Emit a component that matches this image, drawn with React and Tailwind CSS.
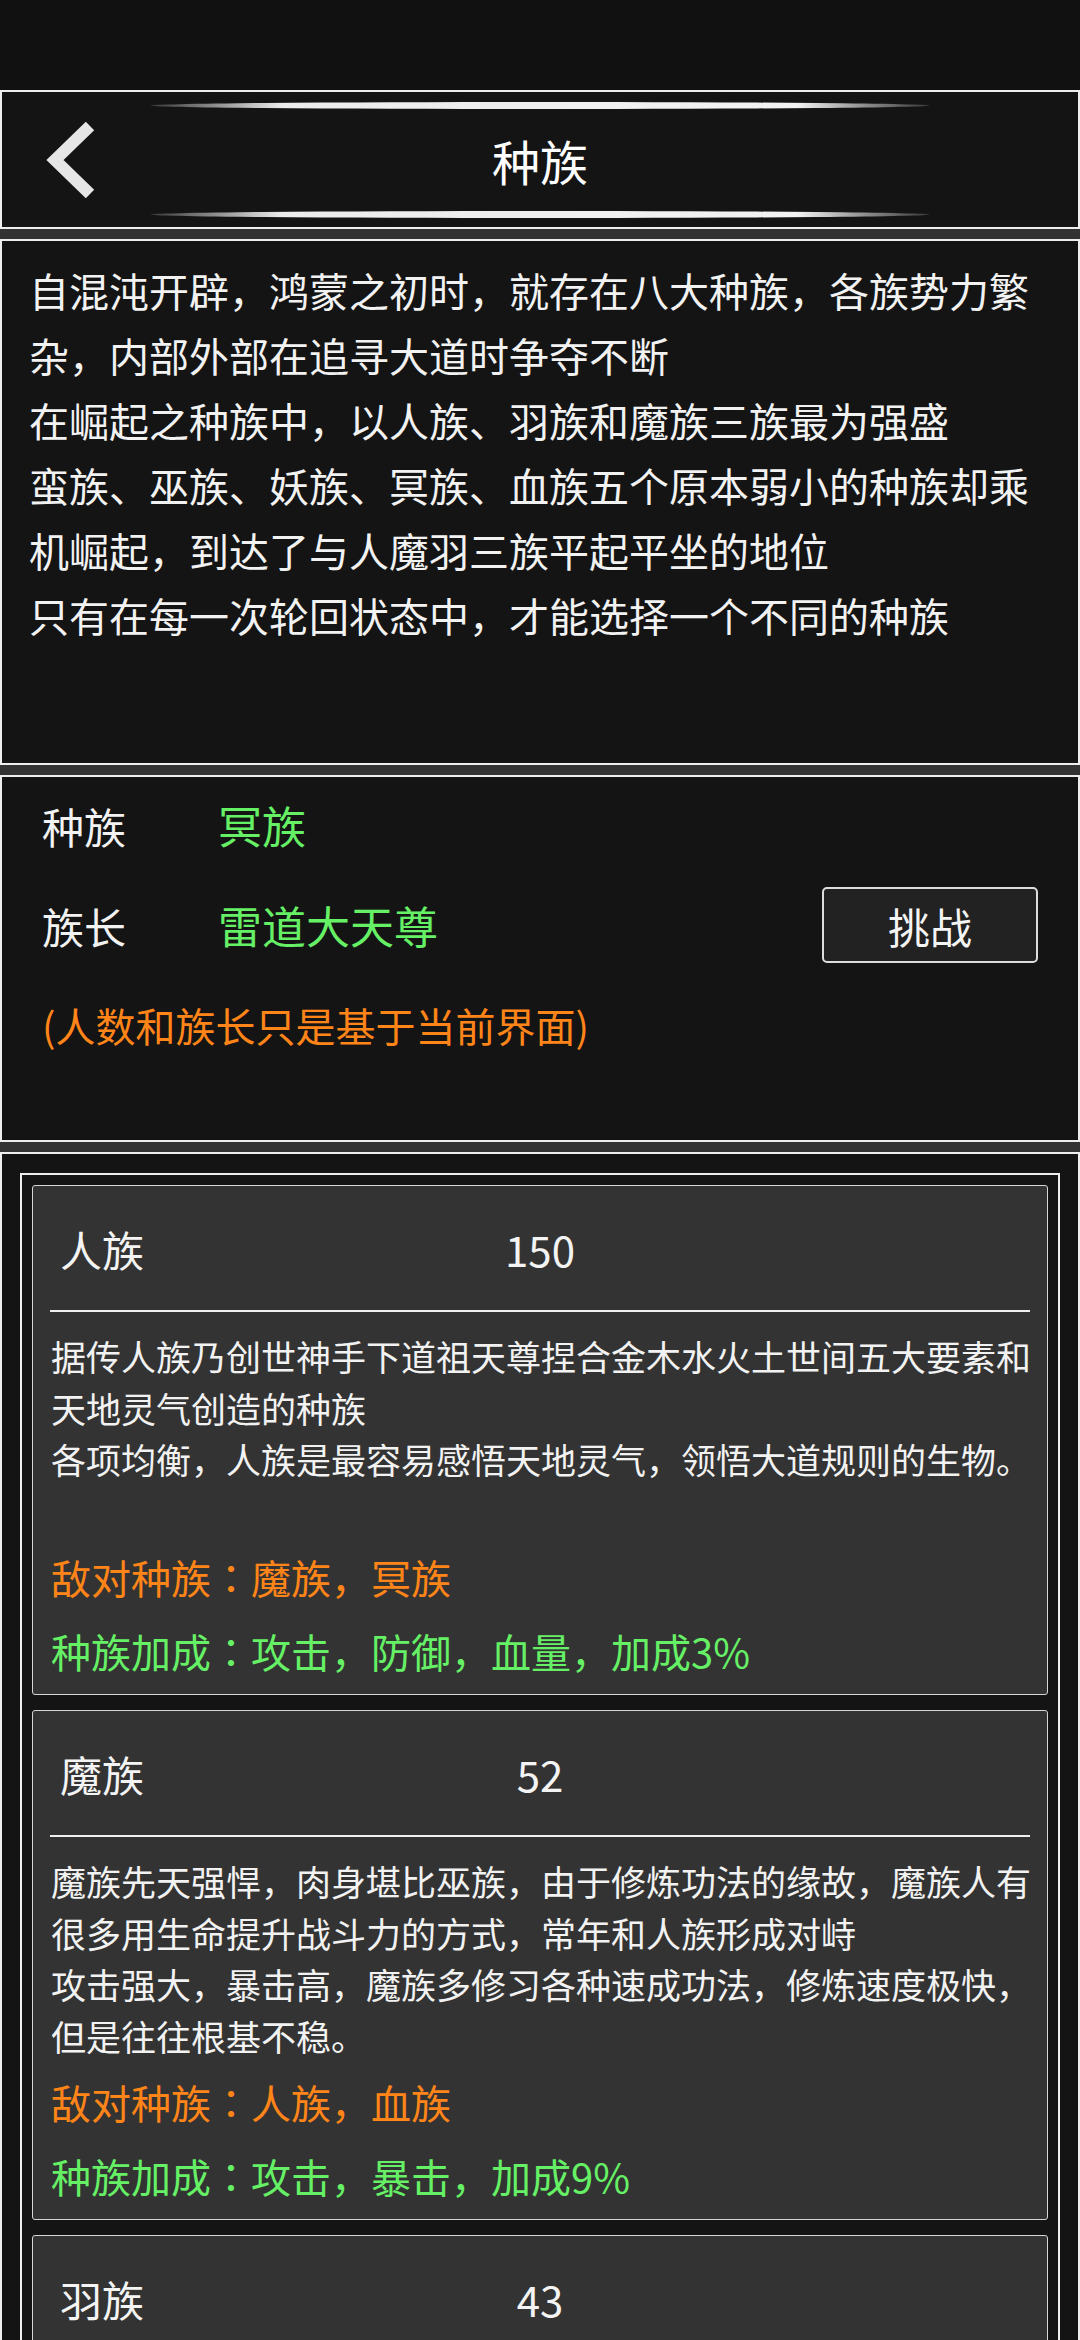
import React from "react";

const races = [
  {
    name: "人族",
    count: 150,
    desc: [
      "据传人族乃创世神手下道祖天尊捏合金木水火土世间五大要素和天地灵气创造的种族",
      "各项均衡，人族是最容易感悟天地灵气，领悟大道规则的生物。",
    ],
    enemy: "魔族，冥族",
    bonus: "攻击，防御，血量，加成3%",
  },
  {
    name: "魔族",
    count: 52,
    desc: [
      "魔族先天强悍，肉身堪比巫族，由于修炼功法的缘故，魔族人有很多用生命提升战斗力的方式，常年和人族形成对峙",
      "攻击强大，暴击高，魔族多修习各种速成功法，修炼速度极快，但是往往根基不稳。",
    ],
    enemy: "人族，血族",
    bonus: "攻击，暴击，加成9%",
  },
  {
    name: "羽族",
    count: 43,
    desc: [
      "羽族生而有翼，身法轻灵，天生亲近风雷之力",
      "速度极快，闪避高，羽族擅长远攻与身法，但是肉身较为孱弱。",
    ],
    enemy: "魔族，巫族",
    bonus: "速度，闪避，加成6%",
  },
];

// centered full-width colon like the reference
const Colon = () => (
  <span className="font-['Noto_Sans_CJK_JP',sans-serif]">：</span>
);

const GlowLine = () => (
  <div className="mx-auto w-[780px] h-[7px] rounded-[50%] bg-[linear-gradient(90deg,#3a3a3a_0%,#8a8a8a_8%,#ececec_17%,#f2f2f2_83%,#8a8a8a_92%,#3a3a3a_100%)]" />
);

const RaceCard = ({ race }) => (
  <div className="border border-[#d6d6d6] rounded-[3px] bg-[#333333] pb-[6px]">
    <div className="h-[124px] grid grid-cols-[1fr_auto_1fr] items-center text-[42px] text-[#f4f4f4]">
      <span className="pl-[27px]">{race.name}</span>
      <span>{race.count}</span>
      <span />
    </div>
    <div className="mx-[17px] h-[2px] bg-[#f0f0f0]" />
    <div className="pl-[18px] pr-[10px] pt-[18px] min-h-[224px] text-[35px] leading-[51.5px] text-[#f2f2f2]">
      {race.desc.map((line, i) => (
        <p key={i}>{line}</p>
      ))}
    </div>
    <p className="mt-[4px] pl-[18px] leading-[74px] text-[40px] text-[#ff8519]">
      敌对种族<Colon />{race.enemy}
    </p>
    <p className="pl-[18px] leading-[74px] text-[40px] text-[#66f066]">
      种族加成<Colon />{race.bonus}
    </p>
  </div>
);

export default function App() {
  return (
    <div className="w-[1080px] h-[2340px] overflow-hidden bg-[#333333] text-[#f2f2f2] font-['Noto_Sans_CJK_SC','Noto_Sans',sans-serif]">
      <div className="h-[90px] bg-[#111111]" />

      <header className="h-[139px] border-2 border-[#eeeeee] bg-[#141414] flex flex-col">
        <div className="pt-[10px]">
          <GlowLine />
        </div>
        <div className="flex-1 grid grid-cols-[1fr_auto_1fr] items-center">
          <div className="pl-[38px]">
            <svg width="60" height="80" viewBox="0 0 60 80">
              <polyline
                points="50,6 15,40 50,74"
                fill="none"
                stroke="#e6e6e6"
                strokeWidth="12"
                strokeLinejoin="miter"
              />
            </svg>
          </div>
          <h1 className="text-[48px] text-white">种族</h1>
          <div />
        </div>
        <div className="pb-[9px]">
          <GlowLine />
        </div>
      </header>

      <section className="mt-[10px] h-[526px] border-2 border-[#eeeeee] bg-[#141414] pl-[27px] pr-[20px] pt-[17px] text-[40px] leading-[65px]">
        <p>自混沌开辟，鸿蒙之初时，就存在八大种族，各族势力繁杂，内部外部在追寻大道时争夺不断</p>
        <p>在崛起之种族中，以人族、羽族和魔族三族最为强盛</p>
        <p>蛮族、巫族、妖族、冥族、血族五个原本弱小的种族却乘机崛起，到达了与人魔羽三族平起平坐的地位</p>
        <p>只有在每一次轮回状态中，才能选择一个不同的种族</p>
      </section>

      <section className="mt-[10px] h-[367px] border-2 border-[#eeeeee] bg-[#141414] px-[40px]">
        <div className="h-[96px] flex items-center">
          <span className="w-[176px] text-[42px]">种族</span>
          <span className="text-[44px] text-[#66f066]">冥族</span>
        </div>
        <div className="h-[104px] flex items-center justify-between">
          <div className="flex items-center">
            <span className="w-[176px] text-[42px]">族长</span>
            <span className="text-[44px] text-[#66f066]">雷道大天尊</span>
          </div>
          <button className="w-[216px] h-[76px] border-2 border-[#dddddd] rounded-[5px] bg-[#222222] text-[42px] text-[#f4f4f4]">
            挑战
          </button>
        </div>
        <div className="h-[96px] flex items-center text-[40px] text-[#ff8519]">
          (人数和族长只是基于当前界面)
        </div>
      </section>

      <section className="mt-[10px] h-[1200px] border-2 border-[#eeeeee] bg-[#141414] px-[18px] pt-[19px]">
        <div className="border-2 border-[#eeeeee] p-[10px] flex flex-col gap-[15px]">
          {races.map((race) => (
            <RaceCard key={race.name} race={race} />
          ))}
        </div>
      </section>
    </div>
  );
}
